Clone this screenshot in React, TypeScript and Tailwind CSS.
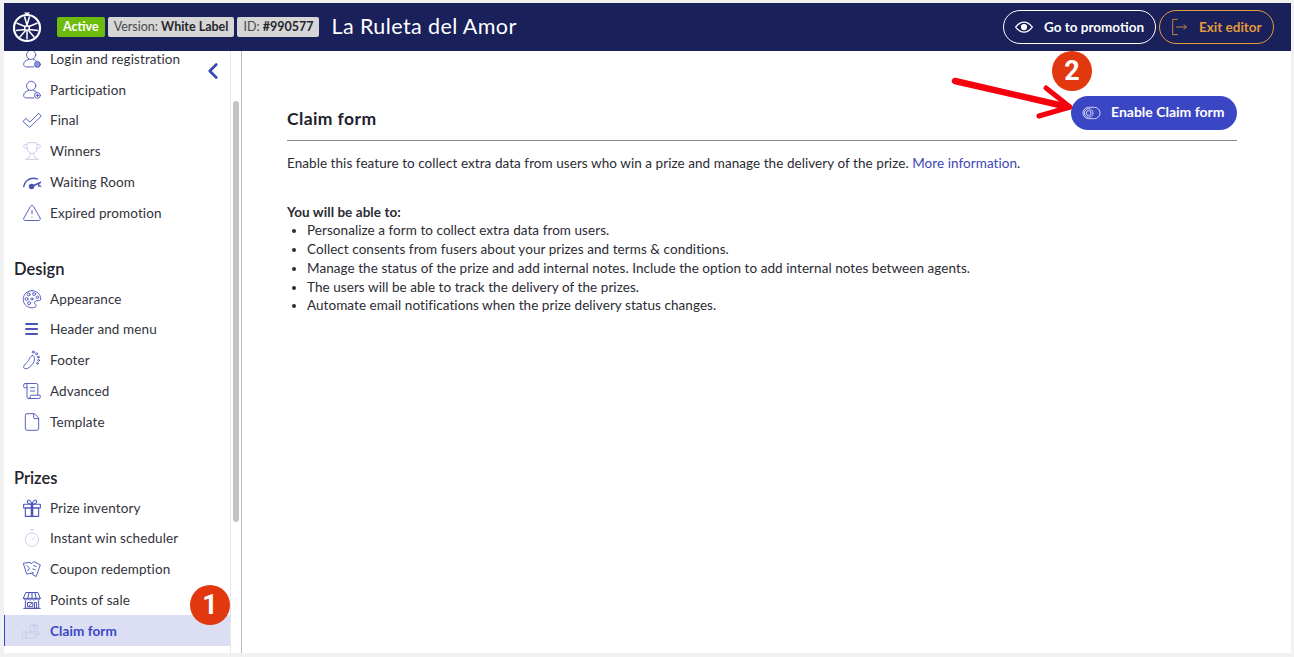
// Promotion editor: claim form page, with tutorial callouts on top.
import type { ReactNode } from "react";
import { ChevronLeft, File, ScrollText, Timer, TriangleAlert, Trophy } from "lucide-react";

const svgProps = {
  viewBox: "0 0 24 24",
  fill: "none",
  stroke: "currentColor",
  strokeWidth: 1.1,
  strokeLinecap: "round" as const,
  strokeLinejoin: "round" as const,
  className: "h-[20px] w-[20px]",
};

function UserBadge({ plus }: { plus?: boolean }) {
  return (
    <svg {...svgProps}>
      <circle cx="11" cy="7" r="5.500" />
      <path d="M8 12.500C4.500 13.500 2 15.500 2 18.500c0 2 1.500 3 3.500 3H14" />
      <path d="M14 12.500c1.500.5 2.800 1.200 3.600 2.200" />
      <circle cx="18.500" cy="18.500" r="3.500" fill={plus ? "none" : "currentColor"} fillOpacity="0.6" />
      {plus && <path d="M18.500 17v3M17 18.500h3" />}
    </svg>
  );
}

function CheckOutline() {
  return (
    <svg {...svgProps}>
      <path d="M1.500 13.500 4.500 10l5 4.500L20 4l3 3.500L9.500 20.500z" />
    </svg>
  );
}

function GaugeIcon() {
  return (
    <svg {...svgProps} strokeWidth={1.6}>
      <path d="M2 17.500C3 11.500 8 7.500 14 7.500c1.500 0 3 .3 4.500 1" />
      <path d="M22 12.500 12 17" strokeWidth={2} />
      <circle cx="11.500" cy="17.500" r="2.500" fill="currentColor" />
      <path d="M20 14v3M22.500 17h-2" />
    </svg>
  );
}

function PaletteIcon() {
  return (
    <svg {...svgProps}>
      <path d="M12 2C6 2 1.500 6.500 1.500 12.500S6.500 22.500 12 22.500c3 0 5-1 5-2.500 0-1.500-2-2-2-3.500s1.500-2.500 3-2.500 4.500 .5 4.500-2C22.500 6.500 18 2 12 2z" />
      <circle cx="8" cy="6.500" r="1.800" />
      <circle cx="14.500" cy="6" r="1.800" />
      <circle cx="18.500" cy="10" r="1.500" />
      <circle cx="5.500" cy="12" r="1.800" />
      <circle cx="8.500" cy="17" r="1.800" />
      <circle cx="12" cy="12" r="1.300" />
    </svg>
  );
}

function BarsIcon() {
  return (
    <svg {...svgProps} strokeWidth={2.200} strokeLinecap="butt">
      <path d="M4 6h15M4 12h15M4 18h15" />
    </svg>
  );
}

function FootIcon() {
  return (
    <svg {...svgProps}>
      <path d="M12.500 6.500c-2.500 1-3.500 4-5 6.500S1.500 18 2 21c.5 2 4 2 6.500 0 3-2.500 6.500-6 6.500-10 0-2-1-5-2.500-4.500z" />
      <circle cx="13.500" cy="2.500" r="1.200" />
      <circle cx="17.500" cy="4.500" r="1.200" />
      <circle cx="19.500" cy="8.500" r="1.100" />
      <circle cx="20" cy="12.500" r="1.100" />
      <circle cx="18.500" cy="16" r="1" />
    </svg>
  );
}

function GiftIcon() {
  return (
    <svg {...svgProps} strokeWidth={1.300}>
      <rect x="2" y="7.500" width="20" height="4.500" />
      <rect x="4" y="12" width="16" height="10" />
      <path d="M12 7.500V22" strokeWidth={3} strokeLinecap="butt" />
      <path d="M12 7.500C9 7.500 5.500 6 6.500 3.500S11 3 12 7.500c1-4.500 4.500-6.500 5.500-4s-2.500 4-5.500 4z" />
    </svg>
  );
}

function StoreIcon() {
  return (
    <svg {...svgProps} strokeWidth={1.200}>
      <path d="M5 3h14l3 7H2z" />
      <path d="M8.500 3 7 10M12 3v7M15.500 3 17 10" />
      <path d="M2 10c0 2.500 5 2.500 5 0 0 2.500 5 2.500 5 0 0 2.500 5 2.500 5 0 0 2.500 5 2.500 5 0" />
      <path d="M4 13v9h16v-9M2 22h20" />
      <rect x="7" y="15" width="6" height="5" />
      <path d="m8.500 19 3-3M15.500 15h2v7h-2z" />
    </svg>
  );
}

function TicketsIcon() {
  return (
    <svg {...svgProps}>
      <path d="M2 5l8-1 1 2 3-3 8 4-5 14-4-2-1-2-6 1z" />
      <path d="m6 8 3 3-2 3M14 8l3 1M13 12l3 1M12 16l2 1" />
    </svg>
  );
}

function HandIcon() {
  return (
    <svg {...svgProps} viewBox="0 0 26 24">
      <rect x="11" y="5" width="9" height="8" />
      <path d="M15.500 5v8M13 5c-1-3 2-3 2.500 0 .5-3 3.500-3 2.500 0" />
      <rect x="1" y="13" width="4" height="9" />
      <path d="M5 15c3-2 6-1 8 0h4c2 0 2 2 0 2.500M5 20.500c6 2 9 1 18-4 1.500-1-.5-2.500-2-1.500l-4 2" />
    </svg>
  );
}

function LogoWheel() {
  return (
    <svg viewBox="0 0 30 32" className="h-[32px] w-[30px]" fill="none" stroke="white">
      <circle cx="15" cy="17" r="13" strokeWidth="2.200" />
      <circle cx="15" cy="17" r="2.300" strokeWidth="1.400" />
      <path
        d="M12.500 5.500 15 14l2.500-8.500M4.500 12l8.500 3.500M25.500 12 17 15.500M4 19.500l9-1M26 19.500l-9-1M7.500 26.500l6-7M22.500 26.500l-6-7M15 20v8.500"
        strokeWidth="1.500"
      />
      <path d="M12 1.500h6L15 5z" fill="white" stroke="none" />
    </svg>
  );
}

const iconSize = { size: 20, strokeWidth: 1.100 };

const sections: {
  title?: string;
  items: { label: string; icon: ReactNode; pale?: boolean; active?: boolean }[];
}[] = [
  {
    items: [
      { label: "Login and registration", icon: <UserBadge /> },
      { label: "Participation", icon: <UserBadge plus /> },
      { label: "Final", icon: <CheckOutline /> },
      { label: "Winners", icon: <Trophy {...iconSize} />, pale: true },
      { label: "Waiting Room", icon: <GaugeIcon /> },
      { label: "Expired promotion", icon: <TriangleAlert {...iconSize} /> },
    ],
  },
  {
    title: "Design",
    items: [
      { label: "Appearance", icon: <PaletteIcon /> },
      { label: "Header and menu", icon: <BarsIcon /> },
      { label: "Footer", icon: <FootIcon /> },
      { label: "Advanced", icon: <ScrollText {...iconSize} /> },
      { label: "Template", icon: <File {...iconSize} /> },
    ],
  },
  {
    title: "Prizes",
    items: [
      { label: "Prize inventory", icon: <GiftIcon /> },
      { label: "Instant win scheduler", icon: <Timer {...iconSize} />, pale: true },
      { label: "Coupon redemption", icon: <TicketsIcon /> },
      { label: "Points of sale", icon: <StoreIcon /> },
      { label: "Claim form", icon: <HandIcon />, pale: true, active: true },
    ],
  },
];

const benefits = [
  "Personalize a form to collect extra data from users.",
  "Collect consents from fusers about your prizes and terms & conditions.",
  "Manage the status of the prize and add internal notes. Include the option to add internal notes between agents.",
  "The users will be able to track the delivery of the prizes.",
  "Automate email notifications when the prize delivery status changes.",
];

function Sidebar() {
  return (
    <aside className="relative flex w-[238px] shrink-0 overflow-hidden border-r border-[#b9b9b9]">
      <nav className="w-[226px] shrink-0 -mt-[7.500px]">
        {sections.map((section, i) => (
          <div key={i}>
            {section.title && (
              <h3 className="flex h-[55px] items-end pb-[2px] pl-[10px] text-[16.500px] font-semibold text-[#22222b]">
                {section.title}
              </h3>
            )}
            {section.items.map((item) => (
              <div
                key={item.label}
                className={
                  item.active
                    ? "flex h-[30.800px] items-center border-l border-[#3b46c4] bg-[#dcdff3] pl-[17px] text-[13.500px] font-bold tracking-[0.100px] text-[#3b46c4]"
                    : "flex h-[30.800px] items-center pl-[18px] text-[13.500px] tracking-[0.100px] text-[#33333c]"
                }
              >
                <span
                  className={
                    item.pale
                      ? "flex w-[28px] shrink-0 text-[#c5c8ea]"
                      : "flex w-[28px] shrink-0 text-[#4a53b8]"
                  }
                >
                  {item.icon}
                </span>
                {item.label}
              </div>
            ))}
          </div>
        ))}
      </nav>
      <div className="w-[11px] border-l border-[#e6e6e6] pl-[2px] pt-[50px]">
        <div className="h-[421px] w-[6px] rounded-full bg-[#c4c4c4]" />
      </div>
      <ChevronLeft size={26} strokeWidth={2.500} className="absolute left-[196px] top-[7px] text-[#3b46b8]" />
    </aside>
  );
}

function Header() {
  return (
    <header className="flex h-[48px] shrink-0 items-center bg-[#19205a] pl-[8px] pr-[17px] text-white">
      <LogoWheel />
      <span className="ml-[15px] rounded-[2px] bg-[#6dbb0c] px-[6px] py-[2px] text-[12.500px] font-bold leading-[16.500px]">
        Active
      </span>
      <span className="ml-[3px] rounded-[2px] bg-[#d6d6d6] px-[6px] py-[2px] text-[12.500px] leading-[16.500px] text-[#4a4a4a]">
        Version: <b className="text-[#26262e]">White Label</b>
      </span>
      <span className="ml-[3px] rounded-[2px] bg-[#d6d6d6] px-[6px] py-[2px] text-[12.500px] leading-[16.500px] text-[#4a4a4a]">
        ID: <b className="text-[#26262e]">#990577</b>
      </span>
      <h1 className="ml-[12px] text-[21.500px] leading-none tracking-[0.400px]">La Ruleta del Amor</h1>
      <button className="ml-auto flex h-[34px] w-[153px] items-center rounded-full border border-white pl-[10px] text-[13.500px] font-bold">
        <svg viewBox="0 0 24 24" className="mr-[10px] h-5 w-5" fill="none" stroke="white" strokeWidth="1.500">
          <path d="M2 12c3-4 6-6 10-6s7 2 10 6c-3 4-6 6-10 6s-7-2-10-6z" />
          <circle cx="12" cy="12" r="3" fill="white" />
        </svg>
        Go to promotion
      </button>
      <button className="ml-[3px] flex h-[34px] w-[115px] items-center rounded-full border border-[#e39a3b] pl-[11px] text-[13.500px] font-bold text-[#e39a3b]">
        <svg viewBox="0 0 20 24" className="mr-[11px] h-[24px] w-[17px]" fill="none" stroke="currentColor" strokeWidth="1">
          <path d="M8 3H2v18h6M6 12h12M15 9l3 3-3 3" />
        </svg>
        Exit editor
      </button>
    </header>
  );
}

function Callout({ n, className }: { n: number; className: string }) {
  return (
    <span
      className={`absolute flex h-10 w-10 items-center justify-center rounded-full bg-[#e1380f] font-['Roboto',sans-serif] text-[27px] font-bold text-white ${className}`}
    >
      {n}
    </span>
  );
}

export default function App() {
  return (
    <div className="relative h-[657px] w-[1294px] overflow-hidden bg-[#f1f1f1] pb-[4px] pl-[4px] pr-[3px] pt-[3px] font-['Lato','Noto_Sans',sans-serif]">
      <div className="flex h-full flex-col bg-white">
        <Header />
        <div className="flex min-h-0 flex-1">
          <Sidebar />
          <main className="min-w-0 flex-1 pl-[45px] pr-[54px] pt-[45px] text-[13.500px] leading-[18.700px] tracking-[0.060px] text-[#2b2b33]">
            <div className="flex h-[45px] items-center justify-between border-b border-[#8c8c8c]">
              <h2 className="mt-[3px] text-[17.500px] font-bold tracking-[0.400px] text-[#22222b]">Claim form</h2>
              <button className="-mt-[11px] flex h-[34px] w-[166px] items-center rounded-full bg-[#3b46c4] pl-[11px] text-[14px] font-bold tracking-normal text-white">
                <svg viewBox="0 0 20 14" className="mr-[10px] h-[14px] w-[19px]" fill="none" stroke="white" strokeWidth="0.800">
                  <rect x="1" y="1" width="18" height="12" rx="6" />
                  <circle cx="7" cy="7" r="4.500" />
                  <circle cx="7" cy="7" r="2.500" />
                </svg>
                Enable Claim form
              </button>
            </div>
            <p className="mt-[13px]">
              Enable this feature to collect extra data from users who win a prize and manage the delivery of the prize.{" "}
              <span className="text-[#3b46b8]">More information</span>.
            </p>
            <p className="mt-[30px] font-bold">You will be able to:</p>
            <ul className="list-disc pl-5">
              {benefits.map((b) => (
                <li key={b}>{b}</li>
              ))}
            </ul>
          </main>
        </div>
      </div>

      <Callout n={1} className="left-[190px] top-[585px]" />
      <Callout n={2} className="left-[1052px] top-[51px]" />
      <svg
        viewBox="0 0 1294 657"
        className="pointer-events-none absolute inset-0 h-[657px] w-[1294px]"
        fill="none"
        stroke="#f5000d"
        strokeLinecap="round"
        strokeLinejoin="round"
      >
        <path d="M955 81 1068 107" strokeWidth="6.500" />
        <path d="M1046 88 1070 107 1039 116" strokeWidth="5" />
      </svg>
    </div>
  );
}
